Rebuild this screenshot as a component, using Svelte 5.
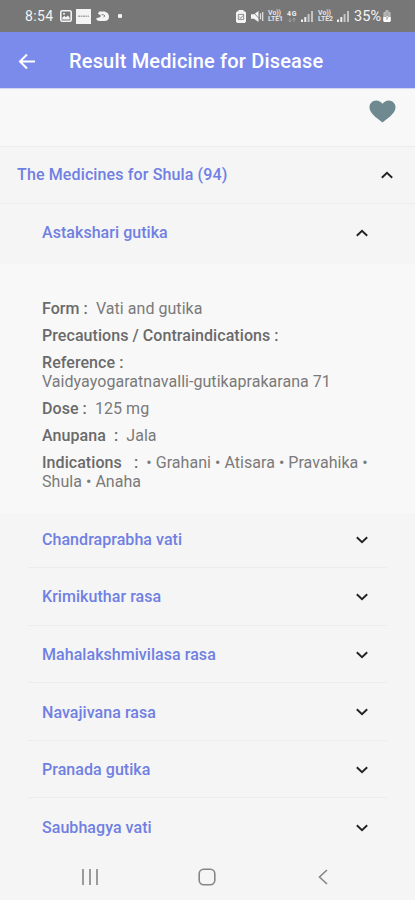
<script lang="ts">
	type Detail = { label: string; sep: string; value: string; wrap?: boolean };
	type Medicine = { name: string; details: Detail[] };

	let sectionOpen = $state(true);
	let selected = $state(0);

	const medicines: Medicine[] = [
		{
			name: 'Astakshari gutika',
			details: [
				{ label: 'Form', sep: ' :  ', value: 'Vati and gutika' },
				{ label: 'Precautions / Contraindications', sep: ' :', value: '' },
				{ label: 'Reference', sep: ' :', value: 'Vaidyayogaratnavalli-gutikaprakarana 71', wrap: true },
				{ label: 'Dose', sep: ' :  ', value: '125 mg' },
				{ label: 'Anupana', sep: '  :  ', value: 'Jala' },
				{ label: 'Indications', sep: '   :  ', value: '• Grahani • Atisara • Pravahika • Shula • Anaha' }
			]
		},
		{ name: 'Chandraprabha vati', details: [] },
		{ name: 'Krimikuthar rasa', details: [] },
		{ name: 'Mahalakshmivilasa rasa', details: [] },
		{ name: 'Navajivana rasa', details: [] },
		{ name: 'Pranada gutika', details: [] },
		{ name: 'Saubhagya vati', details: [] }
	];

	const toggle = (i: number) => {
		selected = selected === i ? -1 : i;
	};
</script>

{#snippet chevron(up: boolean)}
	<svg class="chevron" class:up width="14" height="10" viewBox="0 0 14 10">
		<path d="M1.800 2.200 7 7.200l5.200-5" />
	</svg>
{/snippet}

{#snippet signal()}
	<svg width="13" height="12" viewBox="0 0 13 12">
		<path d="M0 9.500h2V12H0zM3.300 7h2v5h-2z" fill="#eee" />
		<path d="M6.600 4h2v8h-2zM10 1h2v11h-2z" fill="#c4c4c4" />
	</svg>
{/snippet}

{#snippet volte(n: number)}
	<span class="volte"><span>Vo))</span><span>LTE{n}</span></span>
{/snippet}

<div class="screen">
	<div class="status">
		<div class="left">
			<span class="clock">8:54</span>
			<svg width="12" height="12" viewBox="0 0 12 12">
				<rect x=".8" y=".8" width="10.4" height="10.4" rx="1.5" fill="none" stroke="#f4f4f4" stroke-width="1.6" />
				<path d="M2.300 9.500V7.800l2-2 1.600 1.500 2-1.800 1.800 2.300v1.700z" fill="#f4f4f4" />
				<circle cx="4" cy="3.8" r="1" fill="#f4f4f4" />
			</svg>
			<svg class="card" width="15" height="15" viewBox="0 0 15 15">
				<rect width="15" height="15" fill="#f4f4f4" />
				<path d="M2 7.200h11" stroke="#aaa" stroke-width="1.6" stroke-dasharray="2 .5" />
			</svg>
			<svg class="cap" width="13" height="11" viewBox="0 0 13 11">
				<path d="M3 .5h4.500C10.800.5 13 2.800 13 5.700c0 2.900-1.800 4.300-4.500 4.300H3.500C1.500 10 .3 9 .3 7.200L4.500 6V4L2 3z" fill="#f4f4f4" />
				<path d="M5.500 3.800h2.300l1.200 1.200-1.500 1" fill="none" stroke="#777" stroke-width=".9" />
			</svg>
			<span class="dot"></span>
		</div>
		<div class="right">
			<svg width="10" height="13" viewBox="0 0 10 13">
				<path d="M2.500 0h5v1.300h1.200L10 2.600v9.200L8.700 13H1.300L0 11.800V2.600l1.300-1.300h1.200z" fill="#f4f4f4" />
				<path d="M2.300 4.400h5.400v5H2.300zM3.400 7l1.300 1.200L7 5.500" fill="none" stroke="#777" stroke-width=".8" />
			</svg>
			<svg class="mute" width="13" height="13" viewBox="0 0 13 13">
				<path d="M0 4.300h3L7.500 1v11L3 8.700H0z" fill="#f4f4f4" />
				<path d="M9.500 3.200v6.600M11.700 2v9" stroke="#ddd" stroke-width="1.300" />
				<path d="M1 1l10.500 11" stroke="#777" stroke-width=".9" />
			</svg>
			{@render volte(1)}
			<svg class="data" width="10" height="13" viewBox="0 0 10 13">
				<text x="0" y="6.300" textLength="9.500">4G</text>
				<path d="M3 8v4M1.500 10.500 3 12l1.500-1.500M7 12V8M5.500 9.500 7 8l1.500 1.500" fill="none" stroke="#aaa" stroke-width=".8" />
			</svg>
			{@render signal()}
			{@render volte(2)}
			{@render signal()}
			<span class="percent">35%</span>
			<svg class="battery" width="8" height="12" viewBox="0 0 8 13">
				<path d="M2.500 0h3v2H7l1 1v9l-1 1H1l-1-1V3l1-1h1.500z" fill="#b4b4b4" />
				<path d="M0 7.500h8V12l-1 1H1l-1-1z" fill="#fff" />
				<path d="M4.500 3.500 2.600 7.500h1.600L3.800 10.500l2-4.300H4.300z" fill="#fff" stroke="#777" stroke-width=".5" />
			</svg>
		</div>
	</div>

	<header>
		<button class="back" aria-label="Back">
			<svg width="18" height="17" viewBox="0 0 18 17">
				<path d="M17 8.500H2M9 1.500l-7 7 7 7" />
			</svg>
		</button>
		<h1>Result Medicine for Disease</h1>
	</header>

	<div class="favourite">
		<svg width="27" height="23" viewBox="0 0 27 23">
			<path d="M13.500 22.600C5.500 16.500.5 12.500.5 7.300.5 3.300 3.500.5 7.300.5c2.500 0 4.900 1.300 6.200 3.300C14.800 1.800 17.200.5 19.700.5c3.800 0 6.800 2.800 6.800 6.800 0 5.200-5 9.200-13 15.300z" />
		</svg>
	</div>

	<main>
		<button class="row section" onclick={() => (sectionOpen = !sectionOpen)}>
			<span>The Medicines for Shula (94)</span>
			{@render chevron(sectionOpen)}
		</button>
		{#if sectionOpen}
			{#each medicines as medicine, i}
				<button class="row item" class:open={selected === i} onclick={() => toggle(i)}>
					<span>{medicine.name}</span>
					{@render chevron(selected === i)}
				</button>
				{#if selected === i && medicine.details.length}
					<div class="details">
						{#each medicine.details as { label, sep, value, wrap }}
							<p><b>{label}{sep}</b>{#if wrap}<br />{/if}{value}</p>
						{/each}
					</div>
				{/if}
			{/each}
		{/if}
	</main>

	<nav>
		<svg width="16" height="16" viewBox="0 0 16 16"><path d="M1 0v16M8 0v16M15 0v16" /></svg>
		<svg class="home" width="18" height="18" viewBox="0 0 18 18"><rect x="1.200" y="1.200" width="15.600" height="15.600" rx="4.500" /></svg>
		<svg width="10" height="16" viewBox="0 0 10 16"><path d="M9 1 1.500 8 9 15" /></svg>
	</nav>
</div>

<style>
	:global(body) {
		background: #f5f5f5;
	}
	.screen {
		height: 900px;
		display: flex;
		flex-direction: column;
		overflow: hidden;
		background: #f5f5f5;
		font-family: Roboto, sans-serif;
	}
	svg {
		display: block;
		flex: none;
	}
	button {
		border: 0;
		padding: 0;
		background: none;
		font: inherit;
		cursor: pointer;
	}

	.status {
		box-sizing: border-box;
		height: 32px;
		flex: none;
		display: flex;
		justify-content: space-between;
		align-items: center;
		padding: 0 24px 0 25px;
		background: #777;
		color: #f4f4f4;
	}
	.left,
	.right {
		display: flex;
		align-items: center;
	}
	.clock {
		width: 35px;
		font-size: 14px;
		letter-spacing: .35px;
	}
	.card {
		margin-left: 4px;
	}
	.cap {
		margin-left: 5px;
	}
	.dot {
		width: 4px;
		height: 4px;
		margin-left: 9px;
		border-radius: 1px;
		background: #f4f4f4;
	}
	.right {
		gap: 4px;
	}
	.mute {
		margin-left: 1px;
	}
	.volte {
		width: 15px;
		display: flex;
		flex-direction: column;
		font-size: 7px;
		font-weight: 700;
		line-height: 6.5px;
		letter-spacing: -.1px;
		color: #e4e4e4;
	}
	.data text {
		font-size: 7px;
		font-weight: 700;
		fill: #eee;
	}
	.percent {
		font-size: 14.5px;
	}
	.battery {
		margin-left: -2px;
	}

	header {
		height: 57px;
		flex: none;
		display: flex;
		align-items: center;
		background: #7b8bec;
		border-bottom: 1px solid #d3d7f4;
		box-sizing: border-box;
		padding: 2px 0 0 18px;
	}
	.back path {
		fill: none;
		stroke: #fff;
		stroke-width: 2;
	}
	h1 {
		margin: 0 0 0 33px;
		color: #fff;
		font-size: 20px;
		font-weight: 500;
		letter-spacing: .17px;
		white-space: nowrap;
	}

	.favourite {
		box-sizing: border-box;
		height: 56.5px;
		flex: none;
		display: flex;
		justify-content: flex-end;
		padding: 11px 19px 0 0;
		background: #f8f8f8;
	}
	.favourite path {
		fill: #6e8a90;
	}

	main {
		flex: 1;
		min-height: 0;
		overflow: hidden;
	}
	.row {
		box-sizing: border-box;
		height: 57.6px;
		display: flex;
		align-items: center;
		justify-content: space-between;
		color: #707fe2;
		font-size: 16px;
		font-weight: 500;
		letter-spacing: .05px;
		text-align: left;
		white-space: nowrap;
	}
	.section {
		width: 100%;
		height: 58.5px;
		padding: 0 21px 0 17px;
		border-top: 1px solid #ececec;
		border-bottom: 1px solid #ececec;
		letter-spacing: .13px;
	}
	.item {
		width: calc(100% - 56px);
		margin: 0 28px;
		padding: 1.4px 18px 0 14px;
		border-bottom: 1px solid #ececec;
	}
	.item.open {
		height: 60px;
		border-bottom: 0;
		padding: 0 18px 3px 14px;
	}
	.item:last-child {
		border-bottom: 0;
	}
	.chevron path {
		fill: none;
		stroke: #222;
		stroke-width: 1.9;
	}
	.chevron.up {
		transform: rotate(180deg);
	}
	.details {
		box-sizing: border-box;
		height: 249px;
		padding: 35px 42px 0;
		background: #f8f8f8;
		color: #7a7a7a;
		font-size: 16px;
		line-height: 19px;
		letter-spacing: .04px;
	}
	.details + .item {
		height: 55px;
		padding-top: 0;
		padding-bottom: 1px;
	}
	.details p {
		margin: 0 0 8px;
		white-space: pre-wrap;
	}
	.details b {
		color: #6a6a6a;
		font-weight: 500;
		letter-spacing: .06px;
	}

	nav {
		height: 46px;
		flex: none;
		display: flex;
		align-items: center;
		justify-content: space-between;
		padding: 0 87px 0 82px;
	}
	.home {
		margin-right: 3px;
	}
	nav path,
	nav rect {
		fill: none;
		stroke: #858585;
		stroke-width: 1.6;
	}
</style>
